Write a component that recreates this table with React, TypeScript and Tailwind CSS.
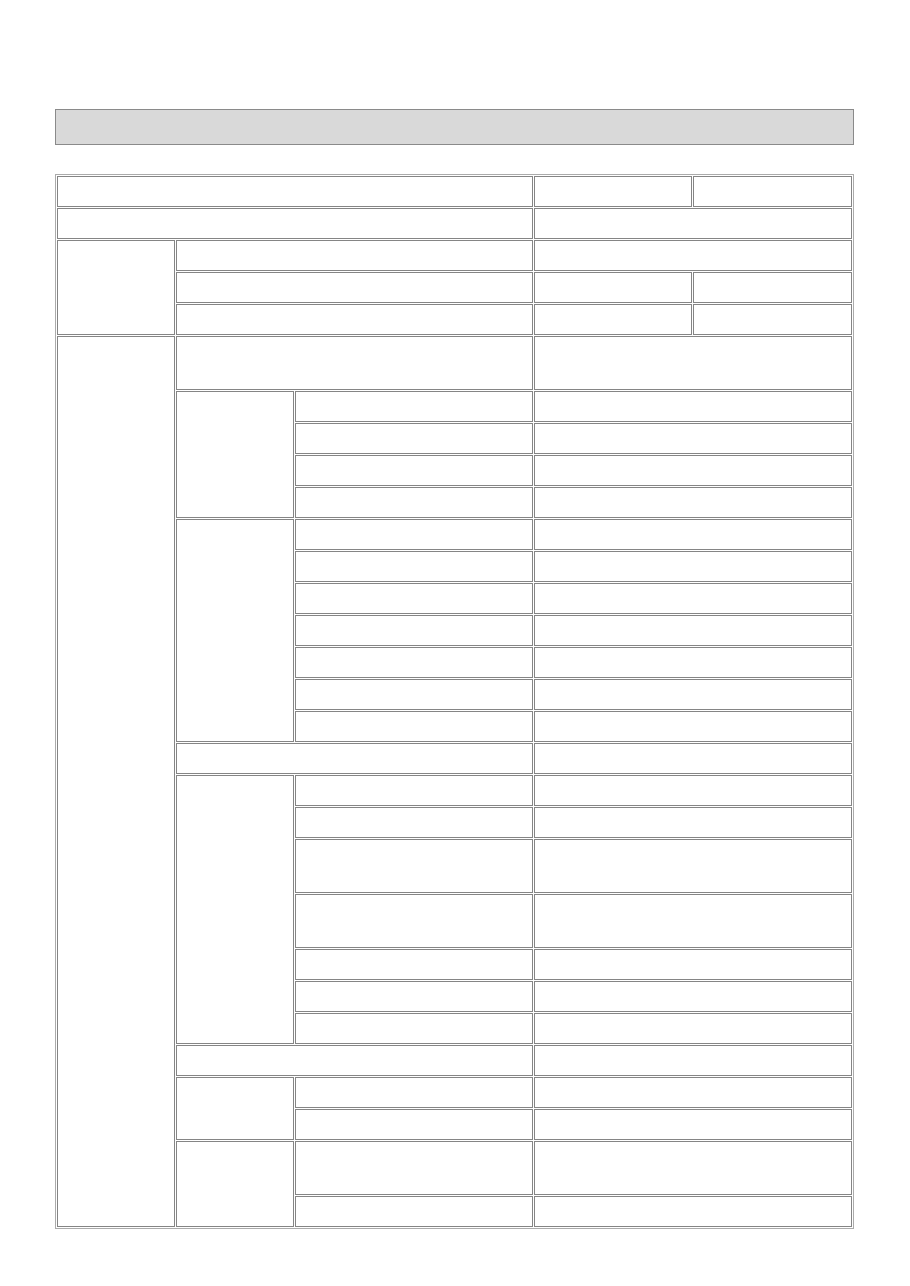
import React from "react";

// Empty form sheet: a grey title bar above a bordered grid of blank cells.

type Cell = { key: string; cls: string };

const c = (key: string, cls: string): Cell => ({ key, cls });

const cells: Cell[] = [
  // rows 1–5
  c("r1a", "col-start-1 col-span-3 row-start-1"),
  c("r1b", "col-start-4 row-start-1"),
  c("r1c", "col-start-5 row-start-1"),
  c("r2a", "col-start-1 col-span-3 row-start-2"),
  c("r2b", "col-start-4 col-span-2 row-start-2"),
  c("r3side", "col-start-1 row-start-3 row-span-3"),
  c("r3a", "col-start-2 col-span-2 row-start-3"),
  c("r3b", "col-start-4 col-span-2 row-start-3"),
  c("r4a", "col-start-2 col-span-2 row-start-4"),
  c("r4b", "col-start-4 row-start-4"),
  c("r4c", "col-start-5 row-start-4"),
  c("r5a", "col-start-2 col-span-2 row-start-5"),
  c("r5b", "col-start-4 row-start-5"),
  c("r5c", "col-start-5 row-start-5"),
  // big left block
  c("r6side", "col-start-1 row-start-6 row-span-25"),
  c("r6a", "col-start-2 col-span-2 row-start-6"),
  c("r6b", "col-start-4 col-span-2 row-start-6"),
  // group 1
  c("g1", "col-start-2 row-start-7 row-span-4"),
  c("r7a", "col-start-3 row-start-7"),
  c("r7b", "col-start-4 col-span-2 row-start-7"),
  c("r8a", "col-start-3 row-start-8"),
  c("r8b", "col-start-4 col-span-2 row-start-8"),
  c("r9a", "col-start-3 row-start-9"),
  c("r9b", "col-start-4 col-span-2 row-start-9"),
  c("r10a", "col-start-3 row-start-10"),
  c("r10b", "col-start-4 col-span-2 row-start-10"),
  // group 2
  c("g2", "col-start-2 row-start-11 row-span-7"),
  c("r11a", "col-start-3 row-start-11"),
  c("r11b", "col-start-4 col-span-2 row-start-11"),
  c("r12a", "col-start-3 row-start-12"),
  c("r12b", "col-start-4 col-span-2 row-start-12"),
  c("r13a", "col-start-3 row-start-13"),
  c("r13b", "col-start-4 col-span-2 row-start-13"),
  c("r14a", "col-start-3 row-start-14"),
  c("r14b", "col-start-4 col-span-2 row-start-14"),
  c("r15a", "col-start-3 row-start-15"),
  c("r15b", "col-start-4 col-span-2 row-start-15"),
  c("r16a", "col-start-3 row-start-16"),
  c("r16b", "col-start-4 col-span-2 row-start-16"),
  c("r17a", "col-start-3 row-start-17"),
  c("r17b", "col-start-4 col-span-2 row-start-17"),
  c("r18a", "col-start-2 col-span-2 row-start-18"),
  c("r18b", "col-start-4 col-span-2 row-start-18"),
  // group 3
  c("g3", "col-start-2 row-start-19 row-span-7"),
  c("r19a", "col-start-3 row-start-19"),
  c("r19b", "col-start-4 col-span-2 row-start-19"),
  c("r20a", "col-start-3 row-start-20"),
  c("r20b", "col-start-4 col-span-2 row-start-20"),
  c("r21a", "col-start-3 row-start-21"),
  c("r21b", "col-start-4 col-span-2 row-start-21"),
  c("r22a", "col-start-3 row-start-22"),
  c("r22b", "col-start-4 col-span-2 row-start-22"),
  c("r23a", "col-start-3 row-start-23"),
  c("r23b", "col-start-4 col-span-2 row-start-23"),
  c("r24a", "col-start-3 row-start-24"),
  c("r24b", "col-start-4 col-span-2 row-start-24"),
  c("r25a", "col-start-3 row-start-25"),
  c("r25b", "col-start-4 col-span-2 row-start-25"),
  c("r26a", "col-start-2 col-span-2 row-start-26"),
  c("r26b", "col-start-4 col-span-2 row-start-26"),
  // group 4
  c("g4", "col-start-2 row-start-27 row-span-2"),
  c("r27a", "col-start-3 row-start-27"),
  c("r27b", "col-start-4 col-span-2 row-start-27"),
  c("r28a", "col-start-3 row-start-28"),
  c("r28b", "col-start-4 col-span-2 row-start-28"),
  // group 5
  c("g5", "col-start-2 row-start-29 row-span-2"),
  c("r29a", "col-start-3 row-start-29"),
  c("r29b", "col-start-4 col-span-2 row-start-29"),
  c("r30a", "col-start-3 row-start-30"),
  c("r30b", "col-start-4 col-span-2 row-start-30"),
];

export default function App() {
  return (
    <div className="w-[910px] h-[1286px] bg-white pt-[109px] pl-[55px] font-['Liberation_Sans',sans-serif]">
      <div className="w-[799px] h-[36px] bg-[#d9d9d9] border border-[#8a8a8a]" />
      <div className="mt-[29px] w-[799px] border border-[#ababab] p-[1px] grid gap-[1px] grid-cols-[118px_118px_238px_158px_159px] grid-rows-[31px_31px_31px_31px_31px_54px_31px_31px_31px_31px_31px_31px_31px_31px_31px_31px_31px_31px_31px_31px_54px_54px_31px_31px_31px_31px_31px_31px_54px_31px]">
        {cells.map((cell) => (
          <div key={cell.key} className={`${cell.cls} border border-[#858585] bg-white`} />
        ))}
      </div>
    </div>
  );
}
